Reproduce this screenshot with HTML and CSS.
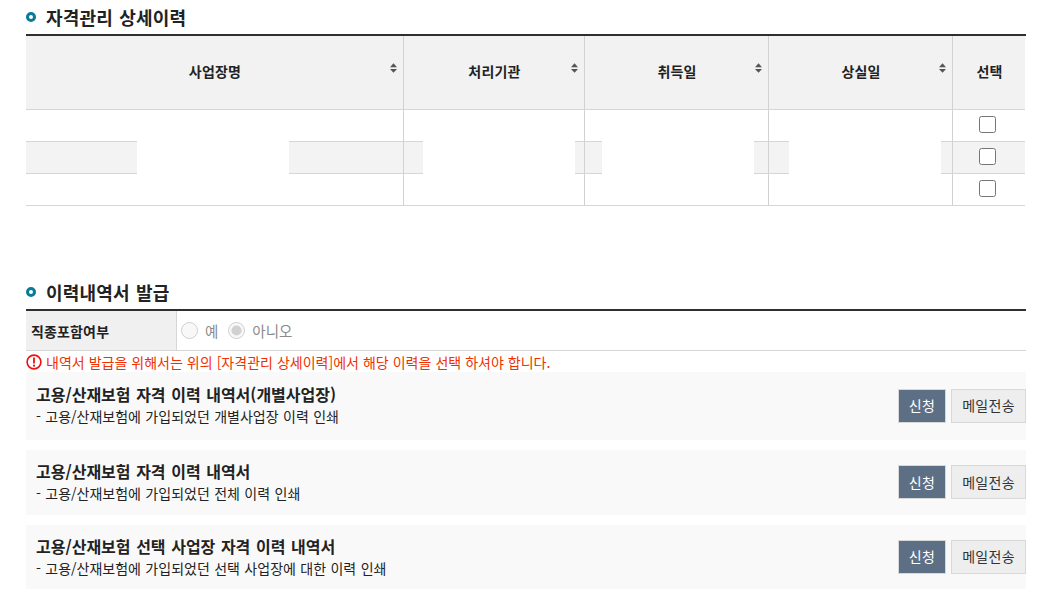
FILE: index.html
```html
<!DOCTYPE html>
<html lang="ko">
<head>
<meta charset="utf-8">
<title>자격관리 상세이력</title>
<link rel="stylesheet" href="styles.css">
</head>
<body>
<main class="page">
  <section class="history">
    <h2 class="title"><span class="dot"></span>자격관리 상세이력</h2>
    <div class="grid-wrap">
    <table class="grid">
      <colgroup>
        <col class="c1"><col class="c2"><col class="c3"><col class="c4"><col class="c5">
      </colgroup>
      <thead>
        <tr>
          <th><span class="th-label">사업장명</span><svg class="sort" viewBox="0 0 8 11"><path d="M4 0 8 4.5H0Z M4 11 0 6.5H8Z"/></svg></th>
          <th><span class="th-label">처리기관</span><svg class="sort" viewBox="0 0 8 11"><path d="M4 0 8 4.5H0Z M4 11 0 6.5H8Z"/></svg></th>
          <th><span class="th-label">취득일</span><svg class="sort" viewBox="0 0 8 11"><path d="M4 0 8 4.5H0Z M4 11 0 6.5H8Z"/></svg></th>
          <th><span class="th-label">상실일</span><svg class="sort" viewBox="0 0 8 11"><path d="M4 0 8 4.5H0Z M4 11 0 6.5H8Z"/></svg></th>
          <th><span class="th-label">선택</span></th>
        </tr>
      </thead>
      <tbody>
        <tr><td></td><td></td><td></td><td></td><td><input class="check" type="checkbox"></td></tr>
        <tr class="stripe">
          <td><span class="blank b1"></span></td>
          <td><span class="blank b2"></span></td>
          <td><span class="blank b3"></span></td>
          <td><span class="blank b4"></span></td>
          <td><input class="check" type="checkbox"></td>
        </tr>
        <tr><td></td><td></td><td></td><td></td><td><input class="check" type="checkbox"></td></tr>
      </tbody>
    </table>
    </div>
  </section>

  <section class="issue">
    <h2 class="title"><span class="dot"></span>이력내역서 발급</h2>
    <div class="option">
      <div class="option-label">직종포함여부</div>
      <div class="option-field">
        <label class="radio"><input type="radio" name="job" disabled>예</label>
        <label class="radio"><input type="radio" name="job" disabled checked>아니오</label>
      </div>
    </div>
    <p class="warn">
      <svg class="warn-icon" viewBox="0 0 16 16"><circle cx="8" cy="8" r="6.9" fill="none" stroke="#f01010" stroke-width="1.6"/><path d="M8 3.6V9.4" stroke="#f01010" stroke-width="1.8" fill="none"/><circle cx="8" cy="11.7" r="1.1" fill="#f01010"/></svg>
      내역서 발급을 위해서는 위의 [자격관리 상세이력]에서 해당 이력을 선택 하셔야 합니다.
    </p>
    <div class="cards">
      <article class="card tall">
        <div class="card-text">
          <h3>고용/산재보험 자격 이력 내역서(개별사업장)</h3>
          <p>- 고용/산재보험에 가입되었던 개별사업장 이력 인쇄</p>
        </div>
        <div class="actions"><button class="btn primary">신청</button><button class="btn">메일전송</button></div>
      </article>
      <article class="card">
        <div class="card-text">
          <h3>고용/산재보험 자격 이력 내역서</h3>
          <p>- 고용/산재보험에 가입되었던 전체 이력 인쇄</p>
        </div>
        <div class="actions"><button class="btn primary">신청</button><button class="btn">메일전송</button></div>
      </article>
      <article class="card">
        <div class="card-text">
          <h3>고용/산재보험 선택 사업장 자격 이력 내역서</h3>
          <p>- 고용/산재보험에 가입되었던 선택 사업장에 대한 이력 인쇄</p>
        </div>
        <div class="actions"><button class="btn primary">신청</button><button class="btn">메일전송</button></div>
      </article>
    </div>
  </section>
</main>
</body>
</html>
```
FILE: styles.css
```css
* { box-sizing: border-box; }
html, body { margin: 0; padding: 0; background: #fff; }
body {
  font-family: "Noto Sans CJK KR", "Noto Sans", sans-serif;
  color: #222;
  font-size: 14px;
  overflow: hidden;
}
.page { width: 1000px; margin-left: 26px; }

.title {
  display: flex;
  align-items: center;
  height: 34px;
  margin: 0;
  font-size: 18px;
  font-weight: 700;
  color: #222;
  letter-spacing: 0.2px;
  word-spacing: 1px;
}
.dot {
  width: 10px;
  height: 10px;
  margin-right: 10px;
  border: 3px solid #0b7a99;
  border-radius: 50%;
}

.grid-wrap { border-top: 2px solid #2f2f2f; }
.grid {
  width: 999px;
  table-layout: fixed;
  border-collapse: separate;
  border-spacing: 0;
}
.c1 { width: 378px; }
.c2 { width: 181px; }
.c3 { width: 184px; }
.c4 { width: 184px; }
.c5 { width: 72px; }
.grid th, .grid td {
  border-right: 1px solid #d2d2d6;
  border-bottom: 1px solid #d6d6d6;
  padding: 0;
  position: relative;
  text-align: center;
}
.grid th:last-child, .grid td:last-child { border-right: 0; }
.grid th {
  height: 74px;
  background: #f2f2f2;
  font-size: 14px;
  font-weight: 700;
  color: #222;
}
.th-label {
  display: block;
  margin-bottom: 3px;
  padding-left: 1px;
  letter-spacing: 0.2px;
}
.grid td { height: 32px; }
.stripe td { background: #f3f3f3; }
.sort {
  position: absolute;
  right: 6px;
  top: 27px;
  width: 7px;
  height: 10px;
  fill: #555;
}
.check {
  display: block;
  width: 17px;
  height: 17px;
  margin: 0 0 1px 26px;
  position: relative;
  top: -1px;
}
.blank {
  position: absolute;
  top: -1px;
  bottom: -1px;
  width: 152px;
  background: #fff;
}
.b1 { left: 111px; }
.b2 { left: 19px; }
.b3 { left: 17px; }
.b4 { left: 20px; }

.issue { margin-top: 69px; }
.option {
  display: flex;
  height: 42px;
  border-top: 2px solid #2f2f2f;
  border-bottom: 1px solid #d6d6d6;
}
.option-label {
  width: 151px;
  padding-left: 5px;
  display: flex;
  align-items: center;
  background: #f0f0f0;
  border-right: 1px solid #d6d6d6;
  font-size: 14px;
  font-weight: 700;
  letter-spacing: 0.15px;
}
.option-field {
  display: flex;
  align-items: center;
  gap: 10px;
  padding-left: 4px;
}
.radio {
  display: flex;
  align-items: center;
  gap: 7px;
  color: #8a8a8a;
  font-size: 14.5px;
}
.radio input { width: 17px; height: 17px; margin: 0; }

.warn {
  display: flex;
  align-items: center;
  gap: 4px;
  height: 21px;
  margin: 0;
  font-size: 14px;
  color: #f03000;
  white-space: nowrap;
  word-spacing: 0.1px;
}
.warn-icon { width: 16px; height: 16px; flex: none; }

.cards { display: flex; flex-direction: column; gap: 10px; }
.card {
  display: flex;
  align-items: center;
  justify-content: space-between;
  height: 65px;
  padding-left: 10px;
  background: #f9f9f9;
}
.card:last-child { height: 64px; }
.card.tall { height: 68px; }
.card-text { padding-bottom: 1px; }
.card.tall .card-text { padding-bottom: 3px; }
.card-text h3 {
  margin: 0;
  font-size: 16px;
  font-weight: 700;
  line-height: 22px;
  word-spacing: 1.1px;
  color: #222;
}
.card-text p {
  margin: 1px 0 0;
  font-size: 14px;
  line-height: 21px;
  word-spacing: 0.5px;
  color: #222;
}
.actions { display: flex; gap: 5px; padding-bottom: 1px; }
.btn {
  height: 34px;
  width: 75px;
  padding: 0 0 1px;
  font: inherit;
  font-size: 14px;
  letter-spacing: 0.3px;
  color: #333;
  background: #eee;
  border: 1px solid #d8d8d8;
}
.btn.primary {
  width: 48px;
  color: #fff;
  background: #5c6f85;
}
```
